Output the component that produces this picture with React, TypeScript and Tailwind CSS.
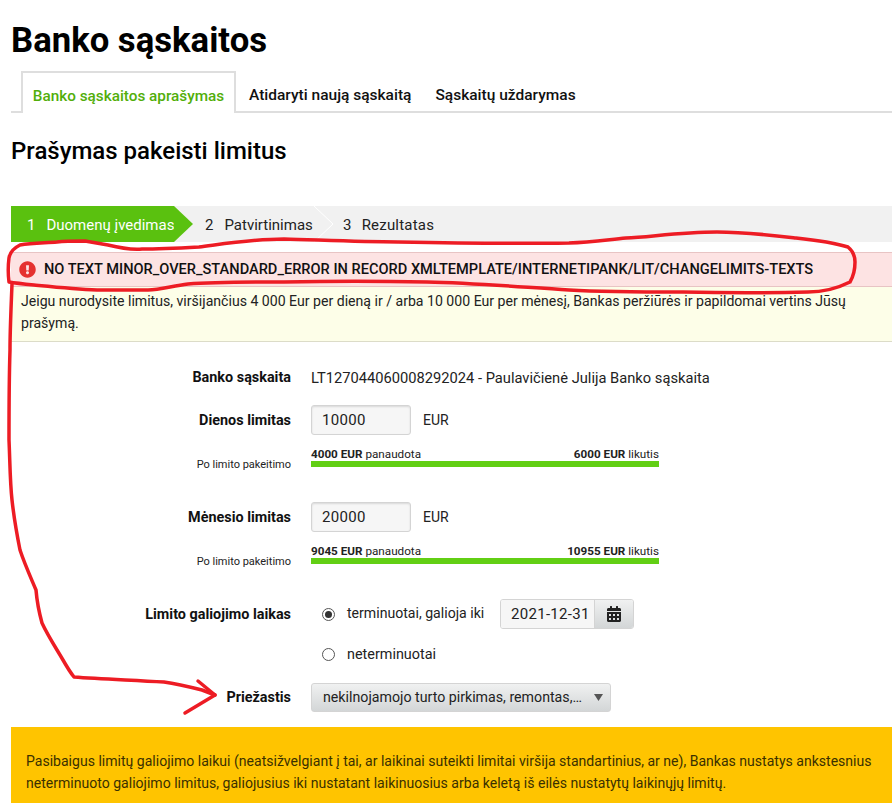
import React from "react";
import { FaCalendarAlt, FaExclamationCircle } from "react-icons/fa";

function Chevron({ fill, stroke }: { fill: string; stroke?: string }) {
  return (
    <svg width="20" height="36" viewBox="0 0 20 36" className="shrink-0 block">
      <path d="M0 0 L19 18 L0 36 Z" fill={fill} />
      {stroke ? <path d="M0 0 L19 18 L0 36" fill="none" stroke={stroke} strokeWidth="1" /> : null}
    </svg>
  );
}

function Bar({ used, left }: { used: string; left: string }) {
  return (
    <div className="grid grid-cols-[280px_348px] gap-x-5 items-end">
      <div className="text-right text-[11px] leading-[13px] text-[#222] -mb-[4px] whitespace-nowrap">Po limito pakeitimo</div>
      <div>
        <div className="flex justify-between pt-[1px] text-[11.7px] leading-[13px] text-[#222] whitespace-nowrap">
          <span><b className="font-bold">{used} EUR</b> panaudota</span>
          <span><b className="font-bold">{left} EUR</b> likutis</span>
        </div>
        <div className="h-[6px] bg-[#62cf14]" />
      </div>
    </div>
  );
}

function LimitRow({ label, value }: { label: string; value: string }) {
  return (
    <div className="grid grid-cols-[280px_1fr] gap-x-5 items-center">
      <div className="text-right pt-[2px] text-[14.4px] font-bold text-[#111]">{label}</div>
      <div className="flex items-center gap-3">
        <div className="w-[100px] h-[30px] border border-[#d4d4d4] rounded-[3px] bg-[#f6f6f6] shadow-[inset_0_1px_2px_rgba(0,0,0,0.12)] pl-[10px] pt-[1px] flex items-center text-[15px] text-[#222] tracking-[0.3px]">{value}</div>
        <span className="text-[14px] text-[#222]">EUR</span>
      </div>
    </div>
  );
}

function Scribble() {
  return (
    <svg width="892" height="805" viewBox="0 0 892 805" className="absolute left-0 top-0 pointer-events-none" fill="none" stroke="#ed1c24" strokeWidth="3.5" strokeLinejoin="round" strokeLinecap="round">
      <path d="M85 241 L108 245 C120 248 130 250 142 249 C160 249 180 248 199 247 C230 243 255 239 284 239 C320 240 360 242 398 242 C450 243 510 244 569 243 C590 242 605 240 626 238 C650 237 680 232 717 232 C745 232 770 235 796 238 C815 240 835 243 848 247 C854 252 855 257 855 262 C855 270 853 277 850 282 C838 288 825 292 808 292 C770 293 725 293 683 292 C645 292 605 292 569 290 C520 287 475 283 427 282 C380 281 330 281 284 282 C250 282 215 282 188 284 C172 286 160 290 148 290 C130 290 115 290 97 290 C75 289 55 287 34 285 C24 284 15 283 9 282 C8 274 8 266 9 258 C10 252 14 248 20 245 C32 243 45 243 57 242 C65 241 75 241 85 241 Z" />
      <path d="M12 284 C11 310 10 330 10 350 C9 380 9 410 9 440 C10 462 10 482 12 500 C14 518 17 535 20 550 C25 565 31 578 36 590 C37 602 39 612 42 623 C48 636 56 648 63 660 C67 667 70 672 74 677 C100 679 130 680 164 682 C178 684 190 687 202 690 L215 695" />
      <path d="M198 681 L215 695 L185 713" />
    </svg>
  );
}

export default function App() {
  return (
    <div className="relative w-[892px] h-[805px] overflow-hidden bg-white pl-[11px] font-['Roboto',sans-serif] text-[#111]">
      <h1 className="pt-[19px] text-[34.7px] leading-[42px] font-bold text-black whitespace-nowrap">Banko sąskaitos</h1>
      <div className="mt-[10px] flex h-[42px] border-b-2 border-[#dedede] items-stretch whitespace-nowrap">
        <div className="ml-[10px] h-[42px] w-[215px] border-x-2 border-t-2 border-[#dedede] bg-white flex items-center justify-center pt-[6px] text-[15.3px] font-medium text-[#52ae0a]">Banko sąskaitos aprašymas</div>
        <div className="ml-[13px] flex items-center pt-[10px] text-[15.5px] font-medium text-[#111]">Atidaryti naują sąskaitą</div>
        <div className="ml-[24px] flex items-center pt-[10px] text-[15.5px] font-medium text-[#111]">Sąskaitų uždarymas</div>
      </div>
      <h2 className="mt-[22px] text-[24px] leading-[32px] font-medium text-black whitespace-nowrap">Prašymas pakeisti limitus</h2>

      <div className="mt-[39px] flex h-[36px] bg-[#f1f1f1] text-[15px] whitespace-nowrap">
        <div className="w-[163px] bg-[#5ac10f] text-white flex items-center pt-[2px] pl-[16px] gap-[11px]"><span>1</span><span>Duomenų įvedimas</span></div>
        <Chevron fill="#5ac10f" />
        <div className="flex items-center pt-[2px] pl-[11px] gap-[11px] w-[120px] text-[#222]"><span>2</span><span>Patvirtinimas</span></div>
        <Chevron fill="#f1f1f1" stroke="#ffffff" />
        <div className="flex items-center pt-[2px] pl-[9px] gap-[10px] text-[#222] tracking-[0.2px]"><span>3</span><span>Rezultatas</span></div>
      </div>

      <div className="mt-[10px] h-[35px] bg-[#fde3e3] border-y border-[#e8c4c4] flex items-center pl-[8px] gap-[8px] text-[14.6px] font-medium text-[#111] whitespace-nowrap">
        <FaExclamationCircle className="text-[#e5312f] w-[17px] h-[17px] shrink-0" />
        <span>NO TEXT MINOR_OVER_STANDARD_ERROR IN RECORD XMLTEMPLATE/INTERNETIPANK/LIT/CHANGELIMITS-TEXTS</span>
      </div>
      <div className="h-[55px] bg-[#fdfee8] border-b border-[#dcdcc8] pl-[10px] pr-[8px] pt-[3px] text-[14.1px] leading-[22px] text-[#222]">
        Jeigu nurodysite limitus, viršijančius 4 000 Eur per dieną ir / arba 10 000 Eur per mėnesį, Bankas peržiūrės ir papildomai vertins Jūsų prašymą.
      </div>

      <div className="mt-[25px] grid grid-cols-[280px_1fr] gap-x-5 items-center h-[20px]">
        <div className="text-right text-[14.4px] font-bold text-[#111]">Banko sąskaita</div>
        <div className="text-[14.7px] text-[#222] whitespace-nowrap">LT127044060008292024 - Paulavičienė Julija Banko sąskaita</div>
      </div>
      <div className="mt-[18px]"><LimitRow label="Dienos limitas" value="10000" /></div>
      <div className="mt-[12px]"><Bar used="4000" left="6000" /></div>
      <div className="mt-[35px]"><LimitRow label="Mėnesio limitas" value="20000" /></div>
      <div className="mt-[12px]"><Bar used="9045" left="10955" /></div>

      <div className="mt-[35px] grid grid-cols-[280px_1fr] gap-x-5 items-center">
        <div className="text-right pt-[2px] text-[14.4px] font-bold text-[#111]">Limito galiojimo laikas</div>
        <div className="flex items-center pl-[11px] whitespace-nowrap">
          <span className="w-[13px] h-[13px] rounded-full border border-[#555] bg-white flex items-center justify-center"><span className="w-[7px] h-[7px] rounded-full bg-[#333]" /></span>
          <span className="ml-[12px] w-[153px] text-[14.1px] text-[#222]">terminuotai, galioja iki</span>
          <div className="w-[134px] h-[30px] flex border border-[#d4d4d4] rounded-[3px] overflow-hidden">
            <div className="w-[93px] bg-[#f6f6f6] flex items-center pl-[10px] pt-[1px] text-[15px] text-[#222] tracking-[0.3px]">2021-12-31</div>
            <div className="flex-1 bg-gradient-to-b from-[#f0f1f1] to-[#d3d6d7] flex items-center justify-center border-l border-[#d4d4d4]"><FaCalendarAlt className="w-[16px] h-[16px] text-[#222]" /></div>
          </div>
        </div>
      </div>
      <div className="mt-[15px] grid grid-cols-[280px_1fr] gap-x-5 items-center h-[20px]">
        <div />
        <div className="flex items-center pl-[11px] whitespace-nowrap">
          <span className="w-[13px] h-[13px] rounded-full border border-[#555] bg-white" />
          <span className="ml-[12px] text-[14.4px] text-[#222]">neterminuotai</span>
        </div>
      </div>
      <div className="mt-[19px] grid grid-cols-[280px_1fr] gap-x-5 items-center">
        <div className="text-right text-[14.4px] font-bold text-[#111]">Priežastis</div>
        <div className="w-[300px] h-[29px] border border-[#d4d4d4] rounded-[3px] bg-gradient-to-b from-[#f0f1f1] to-[#d3d6d7] flex items-center justify-between pl-[11px] pr-[7px] text-[14.2px] text-[#222] whitespace-nowrap">
          <span>nekilnojamojo turto pirkimas, remontas,…</span>
          <svg width="9" height="7" viewBox="0 0 9 7" className="shrink-0"><path d="M0 0 H9 L4.5 7 Z" fill="#555" /></svg>
        </div>
      </div>

      <div className="mt-[15px] h-[76px] bg-[#ffc400] pl-[15px] pr-[8px] pt-[23px] text-[14.05px] leading-[22px] text-[#3a3000]">
        Pasibaigus limitų galiojimo laikui (neatsižvelgiant į tai, ar laikinai suteikti limitai viršija standartinius, ar ne), Bankas nustatys ankstesnius neterminuoto galiojimo limitus, galiojusius iki nustatant laikinuosius arba keletą iš eilės nustatytų laikinųjų limitų.
      </div>
      <Scribble />
    </div>
  );
}
